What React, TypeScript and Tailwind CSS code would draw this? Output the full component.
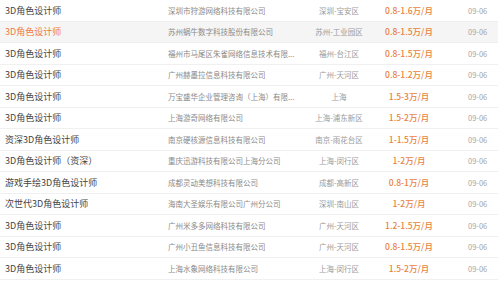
const jobs = [
  ['3D角色设计师', '深圳市狩游网络科技有限公司', '深圳-宝安区', '0.8-1.6万/月'],
  ['3D角色设计师', '苏州蜗牛数字科技股份有限公司', '苏州-工业园区', '0.8-1.5万/月'],
  ['3D角色设计师', '福州市马尾区朱雀网络信息技术有限...', '福州-台江区', '0.8-1.5万/月'],
  ['3D角色设计师', '广州赫墨拉信息科技有限公司', '广州-天河区', '0.8-1.2万/月'],
  ['3D角色设计师', '万宝盛华企业管理咨询（上海）有限...', '上海', '1.5-3万/月'],
  ['3D角色设计师', '上海游奇网络有限公司', '上海-浦东新区', '1.5-2万/月'],
  ['资深3D角色设计师', '南京硬核源信息科技有限公司', '南京-雨花台区', '1-1.5万/月'],
  ['3D角色设计师（资深）', '重庆迅游科技有限公司上海分公司', '上海-闵行区', '1-2万/月'],
  ['游戏手绘3D角色设计师', '成都灵动美想科技有限公司', '成都-高新区', '0.8-1万/月'],
  ['次世代3D角色设计师', '海南大圣娱乐有限公司广州分公司', '深圳-南山区', '1-2万/月'],
  ['3D角色设计师', '广州米多多网络科技有限公司', '广州-天河区', '1.2-1.5万/月'],
  ['3D角色设计师', '广州小丑鱼信息科技有限公司', '广州-天河区', '0.8-1.5万/月'],
  ['3D角色设计师', '上海水象网络科技有限公司', '上海-闵行区', '1.5-2万/月'],
]

export default function App() {
  return (
    <div className="w-[498px] h-[281px] overflow-hidden bg-white font-['Noto_Sans_CJK_SC',sans-serif]">
      {jobs.map(([title, company, city, pay], i) => {
        const active = i === 1
        return (
          <div
            key={i}
            className={`flex items-center h-[21.5px] border-b border-[#f0f0f0] pl-[5px] whitespace-nowrap ${active ? 'bg-[#f5f5f5]' : ''}`}
          >
            <span className={`w-[163px] text-[9px] ${active ? 'text-[#ef7a3e]' : 'text-[#444]'}`}>{title}</span>
            <span className="w-[127px] overflow-hidden text-[7.5px] text-[#8a8a8a]">{company}</span>
            <span className="w-[88px] text-center text-[7.5px] text-[#9a9a9a]">{city}</span>
            <span className="w-[52px] text-center text-[8.5px] font-medium text-[#ea7f3c]">{pay}</span>
            <span className="ml-[33px] text-[7.5px] text-[#a5a5a5]">09-06</span>
          </div>
        )
      })}
    </div>
  )
}
